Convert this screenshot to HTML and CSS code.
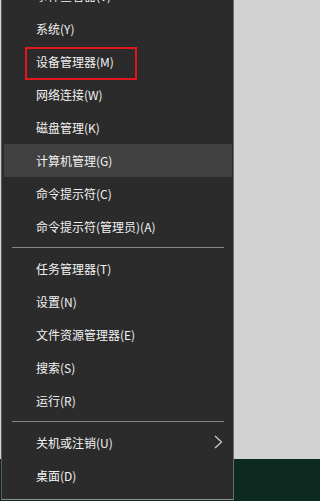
FILE: index.html
```html
<!DOCTYPE html>
<html lang="zh-CN">
<head>
<meta charset="utf-8">
<link rel="stylesheet" href="styles.css">
</head>
<body>
<div class="menu">
  <div class="item">事件查看器(V)</div>
  <div class="item">系统(Y)</div>
  <div class="item marked">设备管理器(M)<span class="mark"></span></div>
  <div class="item">网络连接(W)</div>
  <div class="item">磁盘管理(K)</div>
  <div class="item hover">计算机管理(G)</div>
  <div class="item">命令提示符(C)</div>
  <div class="item">命令提示符(管理员)(A)</div>
  <div class="sep"></div>
  <div class="item">任务管理器(T)</div>
  <div class="item">设置(N)</div>
  <div class="item">文件资源管理器(E)</div>
  <div class="item">搜索(S)</div>
  <div class="item">运行(R)</div>
  <div class="sep"></div>
  <div class="item sub">关机或注销(U)
    <svg class="chev" width="9" height="14" viewBox="0 0 9 14"><path d="M1 1 L7.5 7 L1 13" fill="none" stroke="#cfcfcf" stroke-width="1.2"/></svg>
  </div>
  <div class="item">桌面(D)</div>
</div>
</body>
</html>
```

FILE: styles.css
```css
html, body {
  margin: 0;
  padding: 0;
}
body {
  width: 238px;
  height: 501px;
  overflow: hidden;
  background: linear-gradient(to bottom, #d2d2d2 0, #d2d2d2 459px, #0d2a20 459px, #0d2a20 100%);
  font-family: "Noto Sans CJK SC", "Noto Sans", sans-serif;
  font-size: 12px;
  color: #f2f2f2;
}
.menu {
  margin-top: -21px;
  margin-left: 1px;
  width: 231px;
  background: #2b2b2b;
  border-left: 1px solid #5a5a5a;
  border-right: 1px solid #6a6a6a;
  border-bottom: 1px solid #8e8e8e;
  padding-bottom: 7px;
  display: flex;
  flex-direction: column;
}
.item {
  position: relative;
  height: 33px;
  display: flex;
  align-items: center;
  padding-left: 34px;
  margin: 0 1px 0 2px;
  padding-left: 32px;
  line-height: 1;
}
.hover {
  background: #414141;
}
.sep {
  height: 9px;
  display: flex;
  align-items: center;
  padding: 0 9px 0 10px;
}
.sep::before {
  content: "";
  flex: 1;
  height: 1px;
  background: #858585;
}
.mark {
  position: absolute;
  left: 21px;
  top: 2px;
  width: 112px;
  height: 33px;
  box-sizing: border-box;
  border: 2px solid #e3161d;
}
.chev {
  position: absolute;
  right: 9px;
  top: 9px;
}
```
